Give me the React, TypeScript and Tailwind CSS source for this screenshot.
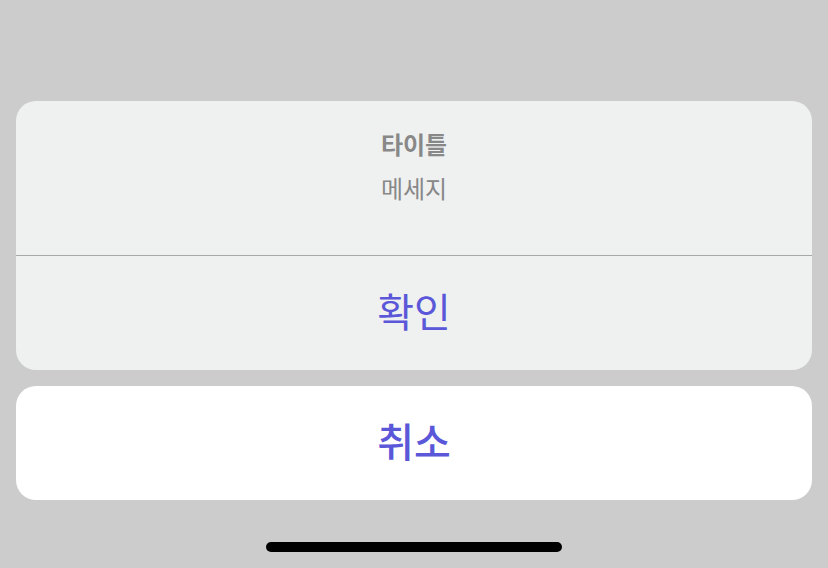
export default function App() {
  return (
    <div
      className="flex h-[568px] w-[828px] flex-col bg-[#cccccc] px-4"
      style={{ fontFamily: '"Noto Sans CJK KR", "Noto Sans", sans-serif' }}
    >
      <div className="mt-[101px] flex h-[269px] flex-col overflow-hidden rounded-[20px] bg-[#eff0f0]">
        <div className="flex h-[154px] flex-col items-center pt-[26px]">
          <p className="text-[24px] font-bold leading-[34px] text-[#888888]">타이틀</p>
          <p className="mt-[10px] text-[24px] leading-[34px] text-[#888888]">메세지</p>
        </div>
        <div className="h-px bg-[#a8a8a8]" />
        <button className="flex flex-1 items-center justify-center pb-[6px] text-[40px] text-[#5a57d8]">확인</button>
      </div>
      <button className="mt-4 flex h-[114px] items-center justify-center rounded-[20px] bg-white pb-[6px] text-[40px] font-medium text-[#5a57d8]">
        취소
      </button>
      <div className="mt-[42px] flex justify-center">
        <div className="h-[10px] w-[296px] rounded-full bg-black" />
      </div>
    </div>
  )
}
